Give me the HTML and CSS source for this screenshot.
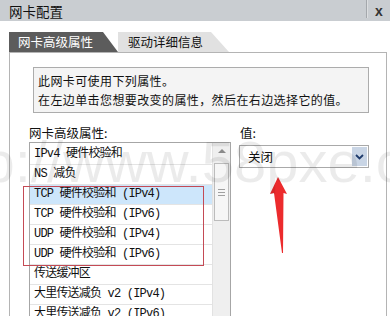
FILE: index.html
```html
<!DOCTYPE html>
<html>
<head>
    <title>网卡配置</title>
    <link rel="stylesheet" href="styles.css">
</head>
<body>
    <div class="window">
        <div class="titlebar">
            <span class="title">网卡配置</span>
            <span class="sep"></span>
            <span class="close">x</span>
        </div>
        <div class="content">
            <div class="tabs">
                <div class="tab active">网卡高级属性</div>
                <div class="tab">驱动详细信息</div>
            </div>
            <div class="pane">
                <div class="info">
                    <p>此网卡可使用下列属性。</p>
                    <p>在左边单击您想要改变的属性，然后在右边选择它的值。</p>
                </div>
                <div class="props">
                    <div class="prop-col">
                        <div class="label">网卡高级属性:</div>
                        <div class="listbox">
                            <ul class="items">
                                <li>IPv4 硬件校验和</li>
                                <li>NS 减负</li>
                                <li class="selected">TCP 硬件校验和 (IPv4)</li>
                                <li>TCP 硬件校验和 (IPv6)</li>
                                <li>UDP 硬件校验和 (IPv4)</li>
                                <li>UDP 硬件校验和 (IPv6)</li>
                                <li>传送缓冲区</li>
                                <li>大里传送减负 v2 (IPv4)</li>
                                <li>大里传送减负 v2 (IPv6)</li>
                            </ul>
                            <div class="scrollbar">
                                <div class="arrow-up"></div>
                                <div class="thumb"><span class="grip"></span></div>
                            </div>
                        </div>
                    </div>
                    <div class="value-col">
                        <div class="label">值:</div>
                        <div class="select">
                            <span class="select-text">关闭</span>
                            <span class="drop">
                                <svg width="9" height="6" viewBox="0 0 9 6"><path d="M1 1 L4.5 4.5 L8 1" fill="none" stroke="#1d3a6b" stroke-width="1.8"/></svg>
                            </span>
                        </div>
                    </div>
                </div>
            </div>
        </div>

        <div class="red-box"></div>
        <svg class="red-arrow" width="20" height="80" viewBox="0 0 20 80">
            <path d="M9 0 L18 17 L14.5 16 L14 76 L13 76 L5 16 L1 17 Z" fill="#ec2b2d"/>
        </svg>
        <div class="watermark">http://www.58pxe.com</div>
    </div>
</body>
</html>
```

FILE: styles.css
```css
body {
    margin: 0;
    overflow: hidden;
    background: #fff;
    font-family: "Noto Sans CJK SC", sans-serif;
    font-size: 12px;
    color: #111;
}
.window {
    position: relative;
    width: 390px;
    height: 316px;
    overflow: hidden;
}
.titlebar {
    display: flex;
    align-items: center;
    height: 21px;
    background: #c9cdd1;
}
.title {
    flex: 1;
    padding-left: 9px;
    font-size: 13.5px;
}
.sep {
    align-self: flex-start;
    width: 1px;
    height: 18px;
    background: #a4a8ac;
    border-right: 1px solid #dcdee0;
}
.close {
    width: 22px;
    text-align: center;
    font-family: "Liberation Sans", sans-serif;
    font-weight: bold;
    font-size: 14px;
    color: #333;
}
.content {
    padding: 11px 3px 0 9px;
}
.tabs {
    display: flex;
    height: 20px;
}
.tab {
    height: 20px;
    line-height: 20px;
    font-size: 12.5px;
    background: #e1e1e1;
    color: #111;
    width: 111px;
    padding-left: 10px;
    box-sizing: border-box;
    clip-path: polygon(0 0, 93px 0, 100% 100%, 0 100%);
}
.tab.active {
    width: 109px;
    padding-left: 9px;
    background: #5c5c5c;
    color: #fff;
    clip-path: polygon(0 0, 94px 0, 100% 100%, 0 100%);
}
.pane {
    height: 300px;
    border: 1px solid #b4b4b4;
    padding: 14px 17px 0 19px;
}
.info {
    margin-left: 4px;
    height: 46px;
    box-sizing: border-box;
    border: 1px solid #acacac;
    background: #f4f4f4;
    padding: 3px 4px;
    letter-spacing: 0.4px;
}
.info p {
    margin: 0;
    line-height: 19px;
}
.props {
    display: flex;
    margin-top: 11px;
}
.label {
    height: 18px;
    line-height: 18px;
    font-size: 12.5px;
}
.prop-col {
    width: 202px;
}
.listbox {
    display: flex;
    height: 200px;
    border: 1px solid #a6a6a6;
    background: #fff;
}
.items {
    flex: 1;
    list-style: none;
    margin: 0;
    padding: 2px 0 0;
    font-family: "Liberation Mono", "Noto Sans CJK SC", monospace;
    font-size: 12px;
    letter-spacing: -0.8px;
}
.items li {
    height: 20px;
    line-height: 19px;
    box-sizing: border-box;
    border-bottom: 1px solid #e4e4e4;
    padding-left: 4px;
    white-space: nowrap;
}
.items li.selected {
    background: #cde6fb;
}
.scrollbar {
    width: 17px;
    background: #efefef;
    border-left: 1px solid #e2e2e2;
}
.arrow-up {
    height: 19px;
    display: flex;
    align-items: center;
    justify-content: center;
}
.arrow-up::before {
    content: "";
    border-left: 4px solid transparent;
    border-right: 4px solid transparent;
    border-bottom: 4px solid #8a8a8a;
    margin-bottom: 4px;
}
.thumb {
    margin: 1px 1px 0 1px;
    height: 56px;
    border: 1px solid #bcbcbc;
    background: #f6f6f6;
    display: flex;
    align-items: center;
    justify-content: center;
}
.grip {
    width: 7px;
    height: 5px;
    border-top: 1px solid #a0a0a0;
    border-bottom: 1px solid #a0a0a0;
    background: linear-gradient(#a0a0a0, #a0a0a0) center / 100% 1px no-repeat;
}
.value-col {
    margin-left: 8px;
    width: 130px;
}
.value-col .label {
    padding-left: 1px;
}
.select {
    display: flex;
    align-items: center;
    margin-top: 3px;
    height: 23px;
    box-sizing: border-box;
    border: 1px solid #a9a9a9;
    background: #fff;
}
.select-text {
    flex: 1;
    padding-left: 8px;
    font-size: 12.5px;
}
.drop {
    display: flex;
    align-items: center;
    justify-content: center;
    width: 15px;
    height: 19px;
    margin-right: 1px;
    background: #c9d5e5;
}
.red-box {
    position: absolute;
    left: 23px;
    top: 186px;
    width: 179px;
    height: 78px;
    border: 1px solid #c44a55;
}
.red-arrow {
    position: absolute;
    left: 269px;
    top: 177px;
}
.watermark {
    position: absolute;
    left: -82px;
    top: 133px;
    font-family: "Liberation Sans", sans-serif;
    font-size: 58px;
    line-height: 58px;
    color: rgba(0, 0, 0, 0.08);
    white-space: nowrap;
    pointer-events: none;
}
```
